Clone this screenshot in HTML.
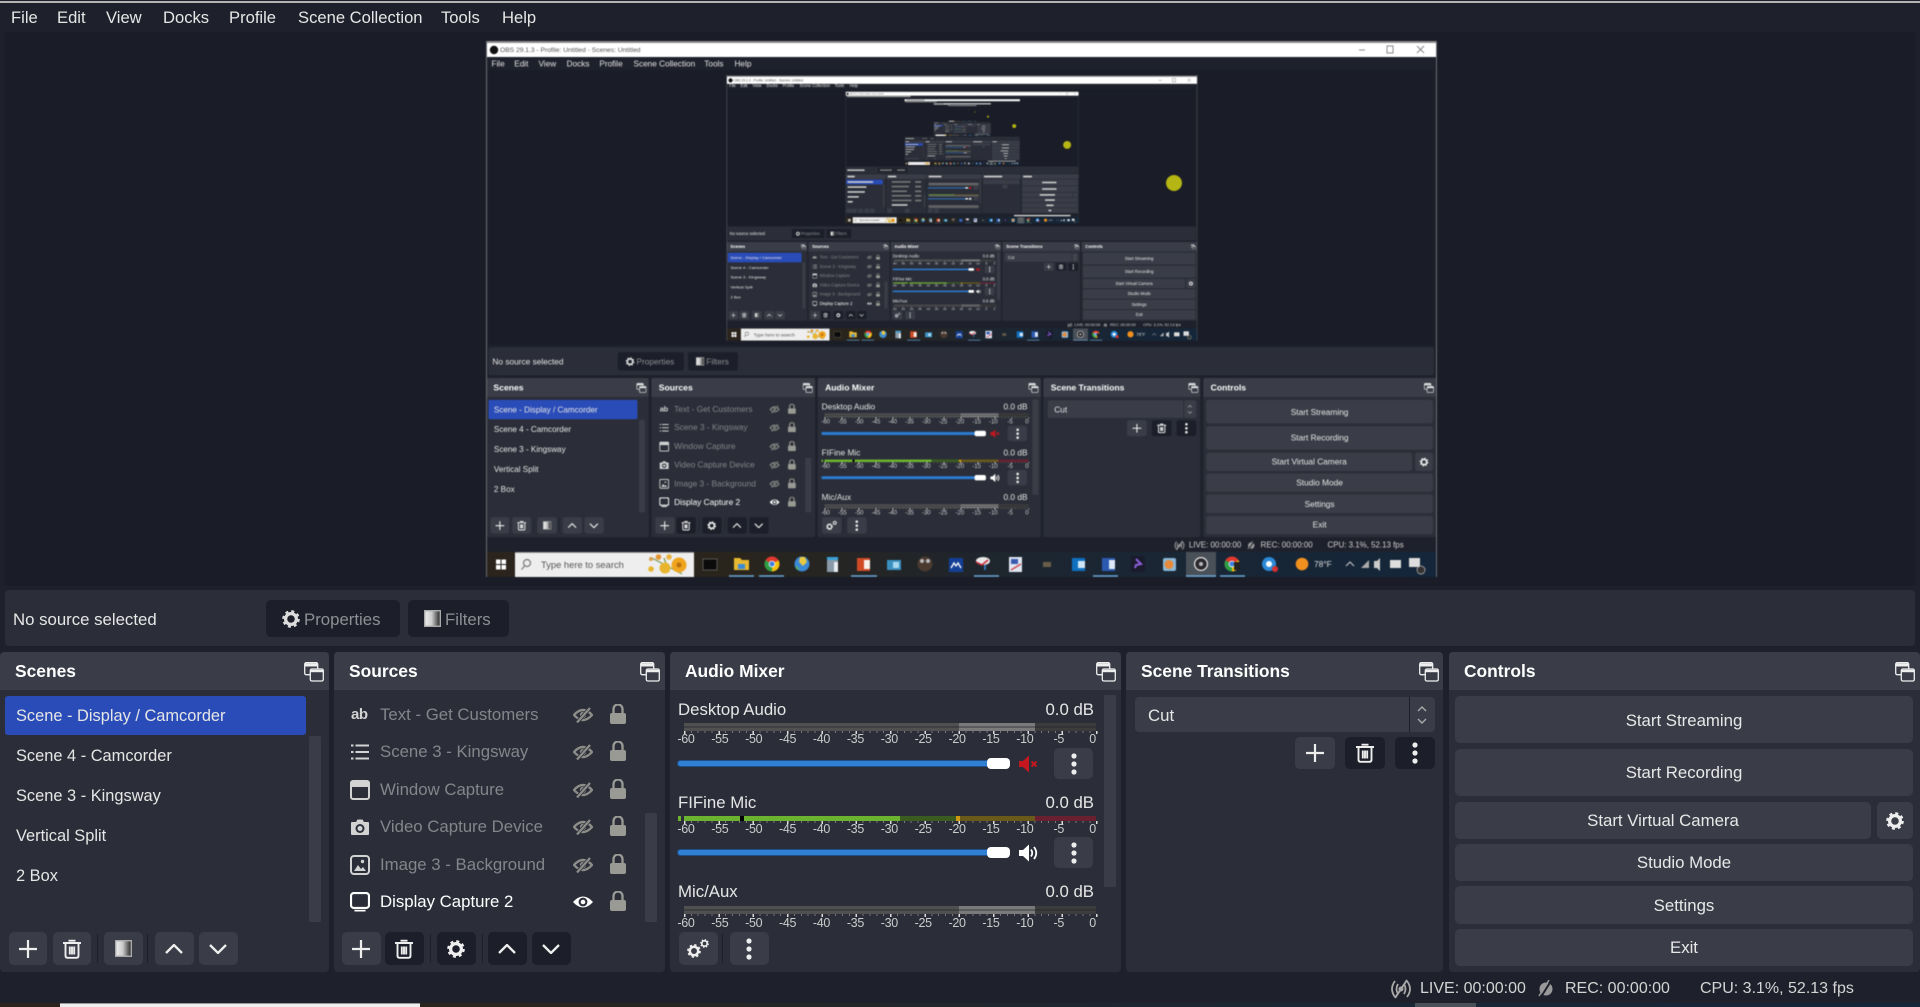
<!DOCTYPE html>
<html><head><meta charset="utf-8"><title>OBS</title>
<style>
html,body{margin:0;background:#1e212b;width:1920px;height:1007px;overflow:hidden}
.o{position:absolute;left:0;top:0;width:1920px;height:1007px;overflow:hidden;background:#1e212b;color:#e6e6e6;font:16.8px/24px "Liberation Sans",sans-serif;white-space:nowrap}
.o div,.o span,.o svg{position:absolute}
.i{left:0;top:13px;transform:scale(.495,.497);transform-origin:0 0}
.pv{left:5px;top:32px;width:1910px;height:554px;background:#1a1d27}
.m{top:6px;font-size:16.6px}.m1{left:11px}.m2{left:57px}.m3{left:106px}.m4{left:163px}.m5{left:229px}.m6{left:298px}.m7{left:441px}.m8{left:502px}
.sr .m{top:7.500px}
.sr{left:486px;top:41px;width:951px;height:536px;overflow:hidden;background:#1a1d27}
.sr:after{content:"";position:absolute;left:0;top:0;right:0;bottom:0;border-left:1px solid #6a6c72;border-right:1px solid #6a6c72}
.bl{filter:blur(.5px)}
.tl{left:0;top:0;width:951px;height:16px;background:#fff;border-top:2px solid #8c8c8c;box-sizing:border-box;color:#555;font-size:6.7px;line-height:14px}
.sr .sr .tl{top:3px}
.tlt{left:14px;top:1px}
.wc{left:0;top:0;width:951px;height:14px}
.tks{left:0;top:511px;width:951px;height:25px}
.tst{left:55px;top:511px;font-size:9.4px;line-height:25px;color:#555}
.tf{left:828px;top:511px;font-size:8.4px;line-height:25px;color:#ddd}
.dot{left:680px;top:134px;width:16px;height:16px;border-radius:50%;background:#b5b513}
.st{left:5px;top:590px;width:1910px;height:56px;background:#2b2e38;border-radius:4px}
.ns{left:13px;top:608px}
.pb{top:600px;height:37px;background:#1c1f29;border-radius:5px}
.pb1{left:266px;width:134px}.pb2{left:408px;width:101px}
.pg{left:282px;top:610px;width:18px;height:18px;color:#dcdcdc}
.pt{left:304px;top:608px;color:#8e8f95}
.pf{left:424px;top:610px;width:17px;height:17px}
.ft{left:445px;top:608px;color:#8e8f95}
.dk{top:652px;height:320px;background:#2b2e38;border-radius:4px;overflow:hidden}
.hd{left:0;top:0;width:100%;height:38px;background:#3a3d47}
.d1{left:0;width:329px}.d2{left:334px;width:331px}.d3{left:670px;width:451px}.d4{left:1126px;width:317px}.d5{left:1449px;width:471px}
.ti{top:659px;font-weight:bold;font-size:17.4px;color:#fff}
.t1{left:15px}.t2{left:349px}.t3{left:685px}.t4{left:1141px}.t5{left:1464px}
.fl{top:662px;width:20px;height:20px;color:#eee}
.f1{left:304px}.f2{left:640px}.f3{left:1096px}.f4{left:1419px}.f5{left:1895px}
.sl{left:5px;top:696px;width:301px;height:39px;background:#2a4cb8;border-radius:3px}
.sn{left:16px;font-size:16.4px}
.n1{top:704px}.n2{top:744px}.n3{top:784px}.n4{top:824px}.n5{top:864px}
.sb{background:#3a3d47;border-radius:2px;width:12px}
.sb1{left:309px;top:736px;height:186px}.sb2{left:645px;top:813px;height:109px}.sb3{left:1104px;top:695px;height:192px}
.bt{display:flex;align-items:center;justify-content:center;background:#3a3d47;border-radius:5px;color:#eee}
.bt svg{position:static}
.dkb{background:#1c1f29}
.tb{top:932px;width:38.5px;height:33px}
.b1{left:8.5px}.b2{left:52.5px}.b3{left:104px}.b4{left:155px}.b5{left:199px}.b6{left:342px}.b7{left:385px}.b8{left:437px}.b9{left:488px}.b10{left:532px}.b11{left:679px}.b12{left:730px}
.sp{top:934px;width:1px;height:29px;background:#1c1f29}
.p1{left:96.5px}.p2{left:147px}.p3{left:430px}.p4{left:481.5px}.p5{left:722px}
.s18{width:18px;height:18px}.s20{width:20px;height:20px}.s17{width:17px;height:17px}.c18{width:18px;height:10px}
.rw{left:0;width:0;height:24px;color:#84858b}
.r1{top:703px}.r2{top:740px}.r3{top:778px}.r4{top:815px}.r5{top:853px}.r6{top:890px;color:#fff}
.si{left:350px;top:2px;width:20px;height:20px;color:#d2d2d2}
.r6 .si{color:#fff}
.ab{left:351px;top:0;font-weight:bold;color:#d2d2d2;font-size:15px;letter-spacing:-.5px}
.tx{left:380px;top:0}
.ey{left:573px;top:4px;width:20px;height:16px;color:#8c8c88}
.r6 .ey{color:#fff}
.lk{left:610px;top:1px;width:16px;height:20px;color:#9a9a94}
.at{left:678px}.db{left:1024px;width:70px;text-align:right}
.y1{top:698px}.y2{top:791px}.y3{top:880px}
.mt{left:684px;width:412px}
.mg{height:8px;background:linear-gradient(#0000 42%,#1e212bb0 42% 58%,#0000 58%),linear-gradient(90deg,#505050 0 275px,#7a7a7a 275px 351px,#3c3c3c 351px)}
.mc{left:678px;width:418px;top:816px;height:5px;background:linear-gradient(90deg,#6cb42f 0 3px,#0000 3px 6px,#6cb42f 6px 62px,#000 62px 66px,#6cb42f 66px 222px,#3a5c20 222px 278px,#d09a10 278px 282px,#6a5a1a 282px 357px,#6a2030 357px)}
.tc{left:684px;width:414px;height:3px;background:repeating-linear-gradient(90deg,#ddd 0 1.5px,#0000 1.5px 34.33px) 0 0/100% 3px no-repeat,repeating-linear-gradient(90deg,#777 0 1px,#0000 1px 6.87px) 0 0/100% 2px no-repeat}
.lb{left:669px;width:441px;display:flex;font-size:12.5px;line-height:14px;color:#ccc;letter-spacing:-.3px}
.lb i{font-style:normal;flex:none;width:33.9px;text-align:center}
.tr{left:678px;width:312px;height:5px;background:#2f7fd4;border-radius:3px;box-shadow:0 0 0 1px #1f4f88}
.hn{left:987px;width:23px;height:11px;background:#fff;border-radius:4px}
.vi{left:1018px;width:20px;height:18px}
.db1{left:1054px;width:39px;height:31px}
.cb{left:1135px;top:697px;width:300px;height:35px;background:#3a3d47;border-radius:4px}
.cs{left:1409px;top:697px;width:1px;height:35px;background:#1c1f29}
.cu{left:1148px;top:704px}
.ca{left:1415px;top:705px;width:14px;height:20px;color:#aaa}
.tb2{top:737px;width:40px;height:32px}
.cw{left:1455px;width:458px;color:#e8e8e8}
.cw[style*="top:696px"],.cw[style*="top:886px"]{padding-top:2px;box-sizing:border-box}
.lv{left:1388px;top:977px;width:26px;height:24px;color:#a8a8a8}
.rc{left:1538px;top:980px;width:16px;height:18px;color:#999}
.ss{top:977px;color:#d4d4d4;font-size:16px}
</style></head><body>
<svg width="0" height="0" style="position:absolute"><defs>
<linearGradient id="fg"><stop offset="0" stop-color="#eee"/><stop offset=".45" stop-color="#ccc"/><stop offset="1" stop-color="#222"/></linearGradient>
<symbol id="plus" viewBox="0 0 18 18"><path d="M9 0v18M0 9h18" stroke="currentColor" stroke-width="2.2" fill="none"/></symbol>
<symbol id="trash" viewBox="0 0 20 20"><path d="M1 4h18M6.500 1.700h7M3.500 4.500v12.300q0 2 2 2h9q2 0 2-2V4.500M7.800 7.500v8M10 7.500v8M12.200 7.500v8" stroke="currentColor" stroke-width="1.900" fill="none"/></symbol>
<symbol id="gear" viewBox="0 0 20 20"><circle cx="10" cy="10" r="6" fill="none" stroke="currentColor" stroke-width="3.600"/><circle cx="10" cy="10" r="8.300" fill="none" stroke="currentColor" stroke-width="3" stroke-dasharray="3.260 3.260"/></symbol>
<symbol id="up" viewBox="0 0 18 10"><path d="M1 9l8-8 8 8" fill="none" stroke="currentColor" stroke-width="2.300"/></symbol>
<symbol id="down" viewBox="0 0 18 10"><path d="M1 1l8 8 8-8" fill="none" stroke="currentColor" stroke-width="2.300"/></symbol>
<symbol id="dots" viewBox="0 0 6 22"><circle cx="3" cy="3" r="2.600" fill="currentColor"/><circle cx="3" cy="11" r="2.600" fill="currentColor"/><circle cx="3" cy="19" r="2.600" fill="currentColor"/></symbol>
<symbol id="filt" viewBox="0 0 17 17"><rect x=".7" y=".7" width="15.600" height="15.600" fill="url(#fg)" stroke="#aaa" stroke-width="1.400"/></symbol>
<symbol id="eyo" viewBox="0 0 20 16"><path d="M1 8Q10-2 19 8 10 18 1 8z" fill="none" stroke="currentColor" stroke-width="2.400"/><circle cx="10" cy="8" r="3.200" fill="currentColor"/><path d="M4 15.500L17 1" stroke="#2b2e38" stroke-width="3.800"/><path d="M4 15.500L17 1" stroke="currentColor" stroke-width="2.300"/></symbol>
<symbol id="eye" viewBox="0 0 20 16"><path d="M0 8Q10-3 20 8 10 19 0 8z" fill="currentColor"/><circle cx="10" cy="8" r="4.400" fill="#2b2e38"/><circle cx="10" cy="8" r="2.300" fill="currentColor"/></symbol>
<symbol id="lock" viewBox="0 0 16 20"><rect x="0" y="9" width="16" height="11" rx="2" fill="currentColor"/><path d="M3.500 9.500V5a4.500 4.500 0 0 1 9 0v4.500" fill="none" stroke="currentColor" stroke-width="2.300"/></symbol>
<symbol id="fl" viewBox="0 0 20 20"><rect x=".7" y=".7" width="13" height="12" rx="1.500" fill="none" stroke="currentColor" stroke-width="1.300"/><path d="M.7 1.500h13v3H.7z" fill="currentColor"/><rect x="6.300" y="7" width="13" height="12" rx="1.500" fill="#3a3d47" stroke="currentColor" stroke-width="1.300"/><path d="M6.300 7.800h13v2.400h-13z" fill="currentColor"/></symbol>
<symbol id="list" viewBox="0 0 20 20"><path d="M5.500 3.500H19M5.500 10H19M5.500 16.500H19" stroke="currentColor" stroke-width="2"/><path d="M1 2.500h2.500v2H1zM1 9h2.500v2H1zM1 15.500h2.500v2H1z" fill="currentColor"/></symbol>
<symbol id="win" viewBox="0 0 20 20"><rect x="1" y="1" width="18" height="18" rx="2" fill="none" stroke="currentColor" stroke-width="2"/><path d="M1 1h18v6H1z" fill="currentColor"/></symbol>
<symbol id="cam" viewBox="0 0 20 20"><path d="M2 5h4l1.500-2.500h5L14 5h4a1 1 0 0 1 1 1v11a1 1 0 0 1-1 1H2a1 1 0 0 1-1-1V6a1 1 0 0 1 1-1z" fill="currentColor"/><circle cx="10" cy="11.500" r="4.500" fill="#2b2e38"/><circle cx="10" cy="11.500" r="2.500" fill="currentColor"/></symbol>
<symbol id="img" viewBox="0 0 20 20"><rect x="1" y="1" width="18" height="18" rx="3" fill="none" stroke="currentColor" stroke-width="2"/><circle cx="12.500" cy="6.500" r="1.700" fill="currentColor"/><path d="M4 16l4-6 3 4 2-2 3 4z" fill="currentColor"/></symbol>
<symbol id="disp" viewBox="0 0 20 20"><rect x="1" y="1" width="18" height="15" rx="3" fill="none" stroke="currentColor" stroke-width="2.200"/><path d="M4.500 18.700h11" stroke="currentColor" stroke-width="1.600"/></symbol>
<symbol id="mute" viewBox="0 0 20 18"><path d="M1 6h4l6-5.500v17L5 12H1z" fill="#c4171f"/><path d="M13.500 6.500l5 5m0-5l-5 5" stroke="#c4171f" stroke-width="2"/></symbol>
<symbol id="vol" viewBox="0 0 20 18"><path d="M1 6h4l6-5.500v17L5 12H1z" fill="#fff"/><path d="M13 5.500q2.500 3.500 0 7M16 3q4.500 6 0 12" fill="none" stroke="#fff" stroke-width="1.800"/></symbol>
<symbol id="gears" viewBox="0 0 22 20"><use href="#gear" x="0" y="5" width="14" height="14"/><use href="#gear" x="13" y="0" width="9" height="9"/></symbol>
<symbol id="arw" viewBox="0 0 14 20"><path d="M3 6l4-4 4 4M3 14l4 4 4-4" fill="none" stroke="currentColor" stroke-width="1.400"/></symbol>
<symbol id="live" viewBox="0 0 26 24"><path d="M7 4Q1 12 7 20M19 4q6 8 0 16M10 7q-3 5 0 10M16 7q3 5 0 10" fill="none" stroke="currentColor" stroke-width="1.800"/><circle cx="13" cy="12" r="2.500" fill="currentColor"/><path d="M7 21L19 3" stroke="currentColor" stroke-width="2"/></symbol>
<symbol id="rec" viewBox="0 0 16 18"><circle cx="8" cy="9" r="6.500" fill="currentColor"/><path d="M3 17L13 1" stroke="#1e212b" stroke-width="2"/><path d="M1 16L11 0" stroke="currentColor" stroke-width="1.500"/></symbol>
<symbol id="wc" viewBox="0 0 951 14"><circle cx="8" cy="7" r="4.200" fill="#111"/><path d="M873 7h6M931 3l7 7m0-7l-7 7" stroke="#888" stroke-width="1" fill="none"/><rect x="901" y="3" width="6" height="7" fill="none" stroke="#888" stroke-width="1"/></symbol>
<linearGradient id="tbg"><stop offset="0" stop-color="#2a241c"/><stop offset=".25" stop-color="#2a251c"/><stop offset=".6" stop-color="#1c2632"/><stop offset="1" stop-color="#14263a"/></linearGradient>
<g id="chr"><circle r="7.500" fill="#e0392f"/><path d="M0 0L-6.500-3.700A7.500 7.500 0 0 0 0 7.500z" fill="#2c9f45"/><path d="M0 0L0 7.500A7.500 7.500 0 0 0 6.500-3.700z" fill="#f4c20d"/><circle r="3.300" fill="#fff"/><circle r="2.500" fill="#3a7de0"/></g>
<g id="tk"><rect width="951" height="25" fill="url(#tbg)"/>
<path d="M10 7.500h4.500v4.500H10zM15.500 7.500H20v4.500h-4.500zM10 13h4.500v4.500H10zM15.500 13H20v4.500h-4.500z" fill="#fff"/>
<rect x="29" y="0" width="179" height="25" fill="#eeeeee"/><rect x="29" y="0" width="179" height="1" fill="#999"/>
<circle cx="41" cy="11" r="3.500" fill="none" stroke="#777" stroke-width="1.200"/><path d="M39 13.500l-3.500 4" stroke="#777" stroke-width="1.200"/>
<path d="M166 6l30 16M178 6l5 14" stroke="#7a9a50" stroke-width="1.200"/><circle cx="193" cy="13" r="7.500" fill="#f0a51e"/><circle cx="193" cy="13" r="2.500" fill="#b87010"/><circle cx="179" cy="16" r="5.500" fill="#e9b52e"/><circle cx="172.500" cy="5" r="2.800" fill="#e39330"/><circle cx="183" cy="5" r="2.800" fill="#e9b240"/><circle cx="165" cy="17" r="2.800" fill="#e9b52e"/><circle cx="165" cy="7" r="2" fill="#d9a050"/>
<rect x="217" y="7" width="14" height="11" fill="#0b0b0b" stroke="#666" stroke-width=".8"/>
<path d="M248 6h6l2 2h7v10h-15z" fill="#e8b830"/><rect x="252" y="12" width="7" height="5" fill="#3a8ad8"/>
<use href="#chr" x="286" y="12"/>
<circle cx="316" cy="12" r="7.500" fill="#3a8ad8"/><path d="M314 5l5 0 2 5-4 4-4-4z" fill="#e8c840"/><path d="M310 13l4 5-4-1z" fill="#5ab060"/>
<rect x="341" y="5" width="11" height="15" fill="#8a9aa8"/><rect x="341" y="5" width="11" height="3" fill="#3aa0d8"/><rect x="348" y="10" width="4" height="10" fill="#e8eef2"/>
<rect x="371" y="6" width="13" height="13" fill="#d04a26"/><rect x="378" y="8" width="6" height="9" fill="#f8f0ea"/>
<rect x="401" y="8" width="14" height="10" fill="#3a90c0"/><rect x="407" y="10" width="6" height="6" fill="#a8d8f0"/>
<circle cx="439" cy="12" r="7.500" fill="#4a3a30"/><circle cx="436" cy="9" r="2" fill="#bbb"/><circle cx="442" cy="9" r="2" fill="#bbb"/>
<rect x="463" y="6" width="14" height="14" fill="#143f96"/><path d="M465 16l3-5 2 3 2-3 3 5" stroke="#fff" stroke-width="1.300" fill="none"/>
<ellipse cx="497" cy="9" rx="7" ry="4" fill="#e8e8e8"/><path d="M490 10l6 3 6-5" stroke="#c23" stroke-width="1.500" fill="none"/><path d="M499 13v5" stroke="#38d" stroke-width="1.500"/>
<rect x="523" y="5" width="13" height="15" fill="#dfe6f2"/><rect x="525" y="7" width="7" height="5" fill="#3a5ab0"/><path d="M525 18l10-6" stroke="#c33" stroke-width="1.300"/>
<rect x="557" y="10" width="8" height="5" fill="#6a5d48"/>
<rect x="586" y="6" width="13" height="13" fill="#1070c0"/><rect x="592" y="9" width="7" height="7" fill="#cfe6f8"/>
<rect x="616" y="6" width="13" height="13" fill="#2a5ab0"/><rect x="623" y="8" width="6" height="9" fill="#dfe8f8"/>
<rect x="645" y="4" width="14" height="16" fill="#1a1c2c"/><path d="M650 7l5 5-5 1-1 3" stroke="#9060e0" stroke-width="2" fill="none"/>
<rect x="677" y="6" width="13" height="13" rx="2" fill="#8ab8d8"/><circle cx="683" cy="12.500" r="4.500" fill="#e88a3a"/>
<rect x="700" y="0" width="30" height="25" fill="#4a5058"/><circle cx="715" cy="12" r="7" fill="#e8e8e8"/><circle cx="715" cy="12" r="5.800" fill="#2a2a2e"/><circle cx="715" cy="12" r="2" fill="#bbb"/>
<use href="#chr" x="746" y="12"/><rect x="748" y="10" width="6" height="8" fill="#222"/>
<circle cx="783" cy="12" r="7" fill="#2a8ad8"/><circle cx="783" cy="12" r="3" fill="#fff"/><circle cx="789" cy="17" r="3" fill="#d83030"/>
<circle cx="816" cy="12" r="6.300" fill="#f0901e"/>
<path d="M860 14l4-4 4 4" stroke="#ccc" stroke-width="1" fill="none"/><path d="M875 16l8-8v8z" fill="#aaa"/><path d="M888 9h3l3-3v13l-3-3h-3z" fill="#ccc"/><rect x="904" y="8" width="11" height="8" fill="#ddd"/><rect x="923" y="6" width="11" height="9" fill="#ddd"/><circle cx="935" cy="18" r="4" fill="#333" stroke="#bbb" stroke-width=".7"/>
<path d="M243 24h25M273 24h25M365 24h26M488 24h25M607 24h25M700 24h30M734 24h25" stroke="#6aa8d8" stroke-width="1.400"/></g>
<g id="pn"><rect width="1920" height="1007" fill="#1e212b"/><rect x="5" y="32" width="1910" height="554" fill="#1a1d27"/>
<rect x="11" y="12" width="525" height="12" fill="#999"/>
<rect x="5" y="590" width="1910" height="56" fill="#2b2e38"/><rect x="13" y="612" width="143" height="14" fill="#bbb"/><rect x="266" y="600" width="134" height="37" fill="#1c1f29"/><rect x="408" y="600" width="101" height="37" fill="#1c1f29"/><rect x="282" y="612" width="100" height="13" fill="#777"/><rect x="424" y="612" width="66" height="13" fill="#777"/>
<g fill="#2b2e38"><rect y="652" width="329" height="320"/><rect x="334" y="652" width="331" height="320"/><rect x="670" y="652" width="451" height="320"/><rect x="1126" y="652" width="317" height="320"/><rect x="1449" y="652" width="471" height="320"/></g>
<g fill="#3a3d47"><rect y="652" width="329" height="38"/><rect x="334" y="652" width="331" height="38"/><rect x="670" y="652" width="451" height="38"/><rect x="1126" y="652" width="317" height="38"/><rect x="1449" y="652" width="471" height="38"/>
<rect x="1135" y="697" width="300" height="35"/><rect x="1455" y="696" width="458" height="47"/><rect x="1455" y="749" width="458" height="47"/><rect x="1455" y="802" width="416" height="37"/><rect x="1877" y="802" width="36" height="37"/><rect x="1455" y="844" width="458" height="37"/><rect x="1455" y="886" width="458" height="38"/><rect x="1455" y="929" width="458" height="37"/><rect x="309" y="736" width="12" height="186"/><rect x="1104" y="695" width="12" height="192"/><rect x="645" y="813" width="12" height="109"/></g>
<rect x="5" y="696" width="301" height="39" fill="#2a4cb8"/>
<g fill="#ccc"><rect x="15" y="664" width="60" height="14"/><rect x="349" y="664" width="68" height="14"/><rect x="685" y="664" width="105" height="14"/><rect x="1141" y="664" width="150" height="14"/><rect x="1464" y="664" width="72" height="14"/><rect x="16" y="709" width="210" height="13"/><rect x="16" y="750" width="155" height="13"/><rect x="16" y="790" width="142" height="13"/><rect x="16" y="830" width="92" height="13"/><rect x="16" y="870" width="42" height="13"/><rect x="380" y="896" width="130" height="13"/><rect x="1620" y="713" width="118" height="13"/><rect x="1620" y="766" width="118" height="13"/><rect x="1600" y="814" width="126" height="13"/><rect x="1644" y="856" width="80" height="13"/><rect x="1654" y="899" width="60" height="13"/><rect x="1672" y="941" width="24" height="13"/><rect x="1388" y="983" width="466" height="12"/></g>
<g fill="#777"><rect x="380" y="708" width="155" height="13"/><rect x="380" y="746" width="142" height="13"/><rect x="380" y="784" width="125" height="13"/><rect x="380" y="821" width="160" height="13"/><rect x="380" y="859" width="164" height="13"/><rect x="573" y="708" width="50" height="14"/><rect x="573" y="746" width="50" height="14"/><rect x="573" y="784" width="50" height="14"/><rect x="573" y="821" width="50" height="14"/><rect x="573" y="859" width="50" height="14"/><rect x="684" y="723" width="412" height="8"/><rect x="684" y="906" width="412" height="8"/><rect x="684" y="733" width="412" height="12" opacity=".7"/><rect x="684" y="822" width="412" height="12" opacity=".7"/><rect x="684" y="916" width="412" height="12" opacity=".7"/></g>
<rect x="684" y="816" width="216" height="5" fill="#6cb42f"/><rect x="900" y="816" width="196" height="5" fill="#6a5a1a"/>
<rect x="678" y="760" width="312" height="7" fill="#2f7fd4"/><rect x="678" y="849" width="312" height="7" fill="#2f7fd4"/><rect x="987" y="758" width="23" height="11" fill="#fff"/><rect x="987" y="847" width="23" height="11" fill="#fff"/><rect x="1018" y="756" width="18" height="15" fill="#c4171f"/><rect x="1018" y="845" width="18" height="15" fill="#eee"/>
<g fill="#3a3d47"><rect x="8" y="933" width="39" height="33"/><rect x="52" y="933" width="39" height="33"/><rect x="104" y="933" width="39" height="33"/><rect x="155" y="933" width="39" height="33"/><rect x="199" y="933" width="39" height="33"/><rect x="343" y="933" width="39" height="33"/><rect x="489" y="933" width="38" height="33"/><rect x="679" y="933" width="38" height="33"/><rect x="730" y="933" width="39" height="33"/><rect x="1054" y="748" width="39" height="31"/><rect x="1054" y="837" width="39" height="31"/><rect x="1295" y="737" width="40" height="32"/></g>
</g>
<g id="scr"><rect width="951" height="16" fill="#fff"/><rect width="951" height="2" fill="#8c8c8c"/><rect x="14" y="5" width="150" height="7" fill="#888"/><rect y="511" width="951" height="25" fill="#1e2632"/><use href="#tk" y="511"/><circle cx="688" cy="142" r="8" fill="#b5b513"/></g>
<g id="F"><use href="#pn"/><g transform="translate(486 41)"><rect width="951" height="536" fill="#1a1d27"/><use href="#scr"/></g></g>
<g id="E"><use href="#pn"/><g transform="translate(486 41)"><rect width="951" height="536" fill="#1a1d27"/><g transform="translate(0 13) scale(.495 .497)"><use href="#F"/></g><use href="#scr"/></g></g>
<g id="D"><use href="#pn"/><g transform="translate(486 41)"><rect width="951" height="536" fill="#1a1d27"/><g transform="translate(0 13) scale(.495 .497)"><use href="#E"/></g><use href="#scr"/></g></g>
</defs></svg>

<div class="o">
<div style="left:0;top:1px;width:1920px;height:2px;background:#b4b4b4"></div>
<div class="pv"></div>
<span class="m m1">File</span><span class="m m2">Edit</span><span class="m m3">View</span><span class="m m4">Docks</span><span class="m m5">Profile</span><span class="m m6">Scene Collection</span><span class="m m7">Tools</span><span class="m m8">Help</span>

<div class="sr bl">
 <div class="o i">
 <div class="pv"></div>
 <span class="m m1">File</span><span class="m m2">Edit</span><span class="m m3">View</span><span class="m m4">Docks</span><span class="m m5">Profile</span><span class="m m6">Scene Collection</span><span class="m m7">Tools</span><span class="m m8">Help</span>
 <div class="sr">
  <div class="o i">
  <div class="pv"></div>
  <span class="m m1">File</span><span class="m m2">Edit</span><span class="m m3">View</span><span class="m m4">Docks</span><span class="m m5">Profile</span><span class="m m6">Scene Collection</span><span class="m m7">Tools</span><span class="m m8">Help</span>
  <div class="sr">
   <svg class="i" width="1920" height="1007" viewBox="0 0 1920 1007"><use href="#D"/></svg>
   <div class="tl"><svg class="wc"><use href="#wc"/></svg><span class="tlt">OBS 29.1.3 - Profile: Untitled - Scenes: Untitled</span></div>
   <svg class="tks"><use href="#tk"/></svg><span class="tst">Type here to search</span><span class="tf">78°F</span><div class="dot"></div>
  </div>
  <div class="st"></div><span class="ns">No source selected</span><div class="pb pb1"></div><div class="pb pb2"></div><svg class="pg"><use href="#gear"/></svg><span class="pt">Properties</span><svg class="pf"><use href="#filt"/></svg><span class="ft">Filters</span>
  <div class="dk d1"><div class="hd"></div></div><div class="dk d2"><div class="hd"></div></div><div class="dk d3"><div class="hd"></div></div><div class="dk d4"><div class="hd"></div></div><div class="dk d5"><div class="hd"></div></div>
  <span class="ti t1">Scenes</span><span class="ti t2">Sources</span><span class="ti t3">Audio Mixer</span><span class="ti t4">Scene Transitions</span><span class="ti t5">Controls</span>
  <svg class="fl f1"><use href="#fl"/></svg><svg class="fl f2"><use href="#fl"/></svg><svg class="fl f3"><use href="#fl"/></svg><svg class="fl f4"><use href="#fl"/></svg><svg class="fl f5"><use href="#fl"/></svg>
  <div class="sl"></div><span class="sn n1">Scene - Display / Camcorder</span><span class="sn n2">Scene 4 - Camcorder</span><span class="sn n3">Scene 3 - Kingsway</span><span class="sn n4">Vertical Split</span><span class="sn n5">2 Box</span>
  <div class="sb sb1"></div><div class="sb sb2"></div><div class="sb sb3"></div>
  <div class="bt tb b1"><svg class="s18"><use href="#plus"/></svg></div><div class="bt tb b2"><svg class="s20"><use href="#trash"/></svg></div><div class="bt tb b3"><svg class="s17"><use href="#filt"/></svg></div><div class="bt tb b4"><svg class="c18"><use href="#up"/></svg></div><div class="bt tb b5"><svg class="c18"><use href="#down"/></svg></div>
  <div class="sp p1"></div><div class="sp p2"></div><div class="sp p3"></div><div class="sp p4"></div><div class="sp p5"></div>
  <div class="bt tb b6"><svg class="s18"><use href="#plus"/></svg></div><div class="bt dkb tb b7"><svg class="s20"><use href="#trash"/></svg></div><div class="bt dkb tb b8"><svg class="s18"><use href="#gear"/></svg></div><div class="bt tb b9 dkb"><svg class="c18"><use href="#up"/></svg></div><div class="bt dkb tb b10"><svg class="c18"><use href="#down"/></svg></div>
  <div class="rw r1"><span class="ab">ab</span><span class="tx">Text - Get Customers</span><svg class="ey"><use href="#eyo"/></svg><svg class="lk"><use href="#lock"/></svg></div>
  <div class="rw r2"><svg class="si"><use href="#list"/></svg><span class="tx">Scene 3 - Kingsway</span><svg class="ey"><use href="#eyo"/></svg><svg class="lk"><use href="#lock"/></svg></div>
  <div class="rw r3"><svg class="si"><use href="#win"/></svg><span class="tx">Window Capture</span><svg class="ey"><use href="#eyo"/></svg><svg class="lk"><use href="#lock"/></svg></div>
  <div class="rw r4"><svg class="si"><use href="#cam"/></svg><span class="tx">Video Capture Device</span><svg class="ey"><use href="#eyo"/></svg><svg class="lk"><use href="#lock"/></svg></div>
  <div class="rw r5"><svg class="si"><use href="#img"/></svg><span class="tx">Image 3 - Background</span><svg class="ey"><use href="#eyo"/></svg><svg class="lk"><use href="#lock"/></svg></div>
  <div class="rw r6"><svg class="si"><use href="#disp"/></svg><span class="tx">Display Capture 2</span><svg class="ey"><use href="#eye"/></svg><svg class="lk"><use href="#lock"/></svg></div>
  <span class="at y1">Desktop Audio</span><span class="db y1">0.0 dB</span><span class="at y2">FIFine Mic</span><span class="db y2">0.0 dB</span><span class="at y3">Mic/Aux</span><span class="db y3">0.0 dB</span>
  <div class="mt mg" style="top:723px"></div><div class="mt mc"></div><div class="mt mg" style="top:906px"></div>
  <div class="tc" style="top:731px"></div><div class="tc" style="top:821px"></div><div class="tc" style="top:914px"></div>
  <div class="lb" style="top:732px"><i>-60</i><i>-55</i><i>-50</i><i>-45</i><i>-40</i><i>-35</i><i>-30</i><i>-25</i><i>-20</i><i>-15</i><i>-10</i><i>-5</i><i>0</i></div>
  <div class="lb" style="top:822px"><i>-60</i><i>-55</i><i>-50</i><i>-45</i><i>-40</i><i>-35</i><i>-30</i><i>-25</i><i>-20</i><i>-15</i><i>-10</i><i>-5</i><i>0</i></div>
  <div class="lb" style="top:916px"><i>-60</i><i>-55</i><i>-50</i><i>-45</i><i>-40</i><i>-35</i><i>-30</i><i>-25</i><i>-20</i><i>-15</i><i>-10</i><i>-5</i><i>0</i></div>
  <div class="tr" style="top:761px"></div><div class="hn" style="top:758px"></div><svg class="vi" style="top:755px"><use href="#mute"/></svg><div class="bt db1" style="top:748px"><svg width="6" height="22"><use href="#dots"/></svg></div>
  <div class="tr" style="top:850px"></div><div class="hn" style="top:847px"></div><svg class="vi" style="top:844px"><use href="#vol"/></svg><div class="bt db1" style="top:837px"><svg width="6" height="22"><use href="#dots"/></svg></div>
  <div class="bt tb b11"><svg width="22" height="20"><use href="#gears"/></svg></div><div class="bt tb b12"><svg width="6" height="22"><use href="#dots"/></svg></div>
  <div class="cb"></div><div class="cs"></div><span class="cu">Cut</span><svg class="ca"><use href="#arw"/></svg>
  <div class="bt tb2" style="left:1295px"><svg class="s18"><use href="#plus"/></svg></div><div class="bt dkb tb2" style="left:1345px"><svg class="s20"><use href="#trash"/></svg></div><div class="bt dkb tb2" style="left:1395px"><svg width="6" height="22"><use href="#dots"/></svg></div>
  <div class="bt cw" style="top:696px;height:47px">Start Streaming</div><div class="bt cw" style="top:749px;height:47px">Start Recording</div><div class="bt cw" style="top:802px;height:37px;width:416px">Start Virtual Camera</div><div class="bt" style="left:1877px;top:802px;width:36px;height:37px"><svg class="s18"><use href="#gear"/></svg></div><div class="bt cw" style="top:844px;height:37px">Studio Mode</div><div class="bt cw" style="top:886px;height:38px">Settings</div><div class="bt cw" style="top:929px;height:37px">Exit</div>
  <svg class="lv"><use href="#live"/></svg><span class="ss" style="left:1420px">LIVE: 00:00:00</span><svg class="rc"><use href="#rec"/></svg><span class="ss" style="left:1565px">REC: 00:00:00</span><span class="ss" style="left:1700px">CPU: 3.1%, 52.13 fps</span>
  </div>
  <div class="tl"><svg class="wc"><use href="#wc"/></svg><span class="tlt">OBS 29.1.3 - Profile: Untitled - Scenes: Untitled</span></div>
  <svg class="tks"><use href="#tk"/></svg><span class="tst">Type here to search</span><span class="tf">78°F</span><div class="dot"></div>
 </div>
 <div class="st"></div><span class="ns">No source selected</span><div class="pb pb1"></div><div class="pb pb2"></div><svg class="pg"><use href="#gear"/></svg><span class="pt">Properties</span><svg class="pf"><use href="#filt"/></svg><span class="ft">Filters</span>
 <div class="dk d1"><div class="hd"></div></div><div class="dk d2"><div class="hd"></div></div><div class="dk d3"><div class="hd"></div></div><div class="dk d4"><div class="hd"></div></div><div class="dk d5"><div class="hd"></div></div>
 <span class="ti t1">Scenes</span><span class="ti t2">Sources</span><span class="ti t3">Audio Mixer</span><span class="ti t4">Scene Transitions</span><span class="ti t5">Controls</span>
 <svg class="fl f1"><use href="#fl"/></svg><svg class="fl f2"><use href="#fl"/></svg><svg class="fl f3"><use href="#fl"/></svg><svg class="fl f4"><use href="#fl"/></svg><svg class="fl f5"><use href="#fl"/></svg>
 <div class="sl"></div><span class="sn n1">Scene - Display / Camcorder</span><span class="sn n2">Scene 4 - Camcorder</span><span class="sn n3">Scene 3 - Kingsway</span><span class="sn n4">Vertical Split</span><span class="sn n5">2 Box</span>
 <div class="sb sb1"></div><div class="sb sb2"></div><div class="sb sb3"></div>
 <div class="bt tb b1"><svg class="s18"><use href="#plus"/></svg></div><div class="bt tb b2"><svg class="s20"><use href="#trash"/></svg></div><div class="bt tb b3"><svg class="s17"><use href="#filt"/></svg></div><div class="bt tb b4"><svg class="c18"><use href="#up"/></svg></div><div class="bt tb b5"><svg class="c18"><use href="#down"/></svg></div>
 <div class="sp p1"></div><div class="sp p2"></div><div class="sp p3"></div><div class="sp p4"></div><div class="sp p5"></div>
 <div class="bt tb b6"><svg class="s18"><use href="#plus"/></svg></div><div class="bt dkb tb b7"><svg class="s20"><use href="#trash"/></svg></div><div class="bt dkb tb b8"><svg class="s18"><use href="#gear"/></svg></div><div class="bt tb b9 dkb"><svg class="c18"><use href="#up"/></svg></div><div class="bt dkb tb b10"><svg class="c18"><use href="#down"/></svg></div>
 <div class="rw r1"><span class="ab">ab</span><span class="tx">Text - Get Customers</span><svg class="ey"><use href="#eyo"/></svg><svg class="lk"><use href="#lock"/></svg></div>
 <div class="rw r2"><svg class="si"><use href="#list"/></svg><span class="tx">Scene 3 - Kingsway</span><svg class="ey"><use href="#eyo"/></svg><svg class="lk"><use href="#lock"/></svg></div>
 <div class="rw r3"><svg class="si"><use href="#win"/></svg><span class="tx">Window Capture</span><svg class="ey"><use href="#eyo"/></svg><svg class="lk"><use href="#lock"/></svg></div>
 <div class="rw r4"><svg class="si"><use href="#cam"/></svg><span class="tx">Video Capture Device</span><svg class="ey"><use href="#eyo"/></svg><svg class="lk"><use href="#lock"/></svg></div>
 <div class="rw r5"><svg class="si"><use href="#img"/></svg><span class="tx">Image 3 - Background</span><svg class="ey"><use href="#eyo"/></svg><svg class="lk"><use href="#lock"/></svg></div>
 <div class="rw r6"><svg class="si"><use href="#disp"/></svg><span class="tx">Display Capture 2</span><svg class="ey"><use href="#eye"/></svg><svg class="lk"><use href="#lock"/></svg></div>
 <span class="at y1">Desktop Audio</span><span class="db y1">0.0 dB</span><span class="at y2">FIFine Mic</span><span class="db y2">0.0 dB</span><span class="at y3">Mic/Aux</span><span class="db y3">0.0 dB</span>
 <div class="mt mg" style="top:723px"></div><div class="mt mc"></div><div class="mt mg" style="top:906px"></div>
 <div class="tc" style="top:731px"></div><div class="tc" style="top:821px"></div><div class="tc" style="top:914px"></div>
 <div class="lb" style="top:732px"><i>-60</i><i>-55</i><i>-50</i><i>-45</i><i>-40</i><i>-35</i><i>-30</i><i>-25</i><i>-20</i><i>-15</i><i>-10</i><i>-5</i><i>0</i></div>
 <div class="lb" style="top:822px"><i>-60</i><i>-55</i><i>-50</i><i>-45</i><i>-40</i><i>-35</i><i>-30</i><i>-25</i><i>-20</i><i>-15</i><i>-10</i><i>-5</i><i>0</i></div>
 <div class="lb" style="top:916px"><i>-60</i><i>-55</i><i>-50</i><i>-45</i><i>-40</i><i>-35</i><i>-30</i><i>-25</i><i>-20</i><i>-15</i><i>-10</i><i>-5</i><i>0</i></div>
 <div class="tr" style="top:761px"></div><div class="hn" style="top:758px"></div><svg class="vi" style="top:755px"><use href="#mute"/></svg><div class="bt db1" style="top:748px"><svg width="6" height="22"><use href="#dots"/></svg></div>
 <div class="tr" style="top:850px"></div><div class="hn" style="top:847px"></div><svg class="vi" style="top:844px"><use href="#vol"/></svg><div class="bt db1" style="top:837px"><svg width="6" height="22"><use href="#dots"/></svg></div>
 <div class="bt tb b11"><svg width="22" height="20"><use href="#gears"/></svg></div><div class="bt tb b12"><svg width="6" height="22"><use href="#dots"/></svg></div>
 <div class="cb"></div><div class="cs"></div><span class="cu">Cut</span><svg class="ca"><use href="#arw"/></svg>
 <div class="bt tb2" style="left:1295px"><svg class="s18"><use href="#plus"/></svg></div><div class="bt dkb tb2" style="left:1345px"><svg class="s20"><use href="#trash"/></svg></div><div class="bt dkb tb2" style="left:1395px"><svg width="6" height="22"><use href="#dots"/></svg></div>
 <div class="bt cw" style="top:696px;height:47px">Start Streaming</div><div class="bt cw" style="top:749px;height:47px">Start Recording</div><div class="bt cw" style="top:802px;height:37px;width:416px">Start Virtual Camera</div><div class="bt" style="left:1877px;top:802px;width:36px;height:37px"><svg class="s18"><use href="#gear"/></svg></div><div class="bt cw" style="top:844px;height:37px">Studio Mode</div><div class="bt cw" style="top:886px;height:38px">Settings</div><div class="bt cw" style="top:929px;height:37px">Exit</div>
 <svg class="lv"><use href="#live"/></svg><span class="ss" style="left:1420px">LIVE: 00:00:00</span><svg class="rc"><use href="#rec"/></svg><span class="ss" style="left:1565px">REC: 00:00:00</span><span class="ss" style="left:1700px">CPU: 3.1%, 52.13 fps</span>
 </div>
 <div class="tl"><svg class="wc"><use href="#wc"/></svg><span class="tlt">OBS 29.1.3 - Profile: Untitled - Scenes: Untitled</span></div>
 <svg class="tks"><use href="#tk"/></svg><span class="tst">Type here to search</span><span class="tf">78°F</span><div class="dot"></div>
</div>

<div class="st"></div><span class="ns">No source selected</span><div class="pb pb1"></div><div class="pb pb2"></div><svg class="pg"><use href="#gear"/></svg><span class="pt">Properties</span><svg class="pf"><use href="#filt"/></svg><span class="ft">Filters</span>
<div class="dk d1"><div class="hd"></div></div><div class="dk d2"><div class="hd"></div></div><div class="dk d3"><div class="hd"></div></div><div class="dk d4"><div class="hd"></div></div><div class="dk d5"><div class="hd"></div></div>
<span class="ti t1">Scenes</span><span class="ti t2">Sources</span><span class="ti t3">Audio Mixer</span><span class="ti t4">Scene Transitions</span><span class="ti t5">Controls</span>
<svg class="fl f1"><use href="#fl"/></svg><svg class="fl f2"><use href="#fl"/></svg><svg class="fl f3"><use href="#fl"/></svg><svg class="fl f4"><use href="#fl"/></svg><svg class="fl f5"><use href="#fl"/></svg>
<div class="sl"></div><span class="sn n1">Scene - Display / Camcorder</span><span class="sn n2">Scene 4 - Camcorder</span><span class="sn n3">Scene 3 - Kingsway</span><span class="sn n4">Vertical Split</span><span class="sn n5">2 Box</span>
<div class="sb sb1"></div><div class="sb sb2"></div><div class="sb sb3"></div>
<div class="bt tb b1"><svg class="s18"><use href="#plus"/></svg></div><div class="bt tb b2"><svg class="s20"><use href="#trash"/></svg></div><div class="bt tb b3"><svg class="s17"><use href="#filt"/></svg></div><div class="bt tb b4"><svg class="c18"><use href="#up"/></svg></div><div class="bt tb b5"><svg class="c18"><use href="#down"/></svg></div>
<div class="sp p1"></div><div class="sp p2"></div><div class="sp p3"></div><div class="sp p4"></div><div class="sp p5"></div>
<div class="bt tb b6"><svg class="s18"><use href="#plus"/></svg></div><div class="bt dkb tb b7"><svg class="s20"><use href="#trash"/></svg></div><div class="bt dkb tb b8"><svg class="s18"><use href="#gear"/></svg></div><div class="bt tb b9 dkb"><svg class="c18"><use href="#up"/></svg></div><div class="bt dkb tb b10"><svg class="c18"><use href="#down"/></svg></div>
<div class="rw r1"><span class="ab">ab</span><span class="tx">Text - Get Customers</span><svg class="ey"><use href="#eyo"/></svg><svg class="lk"><use href="#lock"/></svg></div>
<div class="rw r2"><svg class="si"><use href="#list"/></svg><span class="tx">Scene 3 - Kingsway</span><svg class="ey"><use href="#eyo"/></svg><svg class="lk"><use href="#lock"/></svg></div>
<div class="rw r3"><svg class="si"><use href="#win"/></svg><span class="tx">Window Capture</span><svg class="ey"><use href="#eyo"/></svg><svg class="lk"><use href="#lock"/></svg></div>
<div class="rw r4"><svg class="si"><use href="#cam"/></svg><span class="tx">Video Capture Device</span><svg class="ey"><use href="#eyo"/></svg><svg class="lk"><use href="#lock"/></svg></div>
<div class="rw r5"><svg class="si"><use href="#img"/></svg><span class="tx">Image 3 - Background</span><svg class="ey"><use href="#eyo"/></svg><svg class="lk"><use href="#lock"/></svg></div>
<div class="rw r6"><svg class="si"><use href="#disp"/></svg><span class="tx">Display Capture 2</span><svg class="ey"><use href="#eye"/></svg><svg class="lk"><use href="#lock"/></svg></div>
<span class="at y1">Desktop Audio</span><span class="db y1">0.0 dB</span><span class="at y2">FIFine Mic</span><span class="db y2">0.0 dB</span><span class="at y3">Mic/Aux</span><span class="db y3">0.0 dB</span>
<div class="mt mg" style="top:723px"></div><div class="mt mc"></div><div class="mt mg" style="top:906px"></div>
<div class="tc" style="top:731px"></div><div class="tc" style="top:821px"></div><div class="tc" style="top:914px"></div>
<div class="lb" style="top:732px"><i>-60</i><i>-55</i><i>-50</i><i>-45</i><i>-40</i><i>-35</i><i>-30</i><i>-25</i><i>-20</i><i>-15</i><i>-10</i><i>-5</i><i>0</i></div>
<div class="lb" style="top:822px"><i>-60</i><i>-55</i><i>-50</i><i>-45</i><i>-40</i><i>-35</i><i>-30</i><i>-25</i><i>-20</i><i>-15</i><i>-10</i><i>-5</i><i>0</i></div>
<div class="lb" style="top:916px"><i>-60</i><i>-55</i><i>-50</i><i>-45</i><i>-40</i><i>-35</i><i>-30</i><i>-25</i><i>-20</i><i>-15</i><i>-10</i><i>-5</i><i>0</i></div>
<div class="tr" style="top:761px"></div><div class="hn" style="top:758px"></div><svg class="vi" style="top:755px"><use href="#mute"/></svg><div class="bt db1" style="top:748px"><svg width="6" height="22"><use href="#dots"/></svg></div>
<div class="tr" style="top:850px"></div><div class="hn" style="top:847px"></div><svg class="vi" style="top:844px"><use href="#vol"/></svg><div class="bt db1" style="top:837px"><svg width="6" height="22"><use href="#dots"/></svg></div>
<div class="bt tb b11"><svg width="22" height="20"><use href="#gears"/></svg></div><div class="bt tb b12"><svg width="6" height="22"><use href="#dots"/></svg></div>
<div class="cb"></div><div class="cs"></div><span class="cu">Cut</span><svg class="ca"><use href="#arw"/></svg>
<div class="bt tb2" style="left:1295px"><svg class="s18"><use href="#plus"/></svg></div><div class="bt dkb tb2" style="left:1345px"><svg class="s20"><use href="#trash"/></svg></div><div class="bt dkb tb2" style="left:1395px"><svg width="6" height="22"><use href="#dots"/></svg></div>
<div class="bt cw" style="top:696px;height:47px">Start Streaming</div><div class="bt cw" style="top:749px;height:47px">Start Recording</div><div class="bt cw" style="top:802px;height:37px;width:416px">Start Virtual Camera</div><div class="bt" style="left:1877px;top:802px;width:36px;height:37px"><svg class="s18"><use href="#gear"/></svg></div><div class="bt cw" style="top:844px;height:37px">Studio Mode</div><div class="bt cw" style="top:886px;height:38px">Settings</div><div class="bt cw" style="top:929px;height:37px">Exit</div>
<svg class="lv"><use href="#live"/></svg><span class="ss" style="left:1420px">LIVE: 00:00:00</span><svg class="rc"><use href="#rec"/></svg><span class="ss" style="left:1565px">REC: 00:00:00</span><span class="ss" style="left:1700px">CPU: 3.1%, 52.13 fps</span>
<div style="left:0;top:1003px;width:1920px;height:4px;background:linear-gradient(90deg,#2a241c,#2a251c 25%,#1c2632 60%,#14263a)"></div><div style="left:60px;top:1003px;width:360px;height:4px;background:linear-gradient(#999 0 1px,#eee 1px)"></div><div style="left:1415px;top:1003px;width:61px;height:4px;background:#4a5058"></div>
</div>
</body></html>
